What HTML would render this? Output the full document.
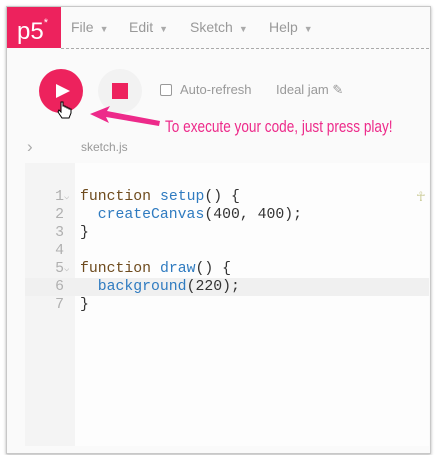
<!DOCTYPE html>
<html><head><style>
body{margin:0;width:437px;height:455px;background:#fff;position:relative;overflow:hidden;font-family:"Liberation Sans",sans-serif}
.frame{position:absolute;left:6px;top:6px;width:423px;height:446px;border:1px solid #c8c8c8;background:#fafafa;box-shadow:0 1px 3px rgba(0,0,0,.3)}
.logo{position:absolute;left:7px;top:7px;width:54px;height:41px;background:#ed225d;color:#fff;font-size:24px;line-height:41px;text-indent:10px}
.logo sup{font-size:11px;position:relative;top:-4px}
.dash{position:absolute;left:61px;top:48px;width:368px;border-top:1px dashed #aaa}
.menu{position:absolute;top:19px;font-size:14px;color:#999}
.menu i{font-style:normal;font-size:9px;color:#aaa;margin-left:6px}
.play{position:absolute;left:39px;top:69px;width:44px;height:44px;border-radius:50%;background:#ed225d}
.stop{position:absolute;left:98px;top:69px;width:44px;height:44px;border-radius:50%;background:#f2f2f2}
.stop div{position:absolute;left:14px;top:14px;width:16px;height:16px;background:#ed225d}
.t{position:absolute;font-size:13px;color:#999}
.gut{position:absolute;left:25px;top:163px;width:50px;height:283px;background:#f4f4f4}
.ed{position:absolute;left:75px;top:163px;width:354px;height:283px;background:#fdfdfd}
.hl{position:absolute;left:25px;top:278px;width:404px;height:18px;background:#f0f0f0}
.code{position:absolute;left:0;top:188px;font-family:"Liberation Mono",monospace;font-size:14.8px;line-height:18px;white-space:pre}
.ln{position:absolute;left:44px;width:20px;text-align:right;color:#b0b0b0}
.fd{position:absolute;left:64px;font-size:9px;color:#bbb}
.c{position:absolute;left:80px;color:#333}
.f{color:#6e4b1e}.b{color:#2f7bc0}
</style></head><body>
<div class="frame"></div>
<div class="logo">p5<sup>*</sup></div>
<div class="dash"></div>
<div class="menu" style="left:71px">File<i>▼</i></div>
<div class="menu" style="left:129px">Edit<i>▼</i></div>
<div class="menu" style="left:190px">Sketch<i>▼</i></div>
<div class="menu" style="left:269px">Help<i>▼</i></div>
<div class="play"><svg width="44" height="44"><path d="M17 15 L31 22 L17 29Z" fill="#fff"/></svg></div>
<div class="stop"><div></div></div>
<div style="position:absolute;left:160px;top:84px;width:10px;height:10px;border:1px solid #999;border-radius:2px;background:#fff"></div>
<div class="t" style="left:180px;top:82px">Auto-refresh</div>
<div class="t" style="left:276px;top:82px">Ideal jam ✎</div>
<svg style="position:absolute;left:56px;top:100px" width="20" height="22"><path d="M5 2 v10 l-2 -2 l-1 2 l4 6 h7 l2 -5 v-4 l-2 0 v-1 l-2 0 v-1 l-2 0 v-1 l-2 0 v-4 z" fill="#fff" stroke="#000" stroke-width="1"/></svg>
<svg style="position:absolute;left:88px;top:104px" width="75" height="28"><path d="M2 10 L22 2 L19 7 L72 17 L71 22 L18 13 L21 19 Z" fill="#ed2a8a"/></svg>
<div style="position:absolute;left:165px;top:117px;font-size:17px;color:#ed2a8a;font-family:'Liberation Sans Narrow','Liberation Sans',sans-serif;transform:scaleX(.8);transform-origin:left;white-space:nowrap">To execute your code, just press play!</div>
<div class="t" style="left:27px;top:137px;font-size:17px;color:#aaa">›</div>
<div class="t" style="left:81px;top:140px;font-size:12px">sketch.js</div>
<div class="gut"></div><div class="ed"></div><div class="hl"></div>
<div style="position:absolute;left:416px;top:189px;color:#cc9;font-size:13px">☥</div>
<div class="code">
<div class="ln" style="top:0">1</div><div class="ln" style="top:18px">2</div><div class="ln" style="top:36px">3</div><div class="ln" style="top:54px">4</div><div class="ln" style="top:72px">5</div><div class="ln" style="top:90px">6</div><div class="ln" style="top:108px">7</div>
<div class="fd" style="top:0">⌵</div><div class="fd" style="top:72px">⌵</div>
<div class="c" style="top:0"><span class="f">function</span> <span class="b">setup</span>() {</div>
<div class="c" style="top:18px">  <span class="b">createCanvas</span>(400, 400);</div>
<div class="c" style="top:36px">}</div>
<div class="c" style="top:72px"><span class="f">function</span> <span class="b">draw</span>() {</div>
<div class="c" style="top:90px">  <span class="b">background</span>(220);</div>
<div class="c" style="top:108px">}</div>
</div>
</body></html>
